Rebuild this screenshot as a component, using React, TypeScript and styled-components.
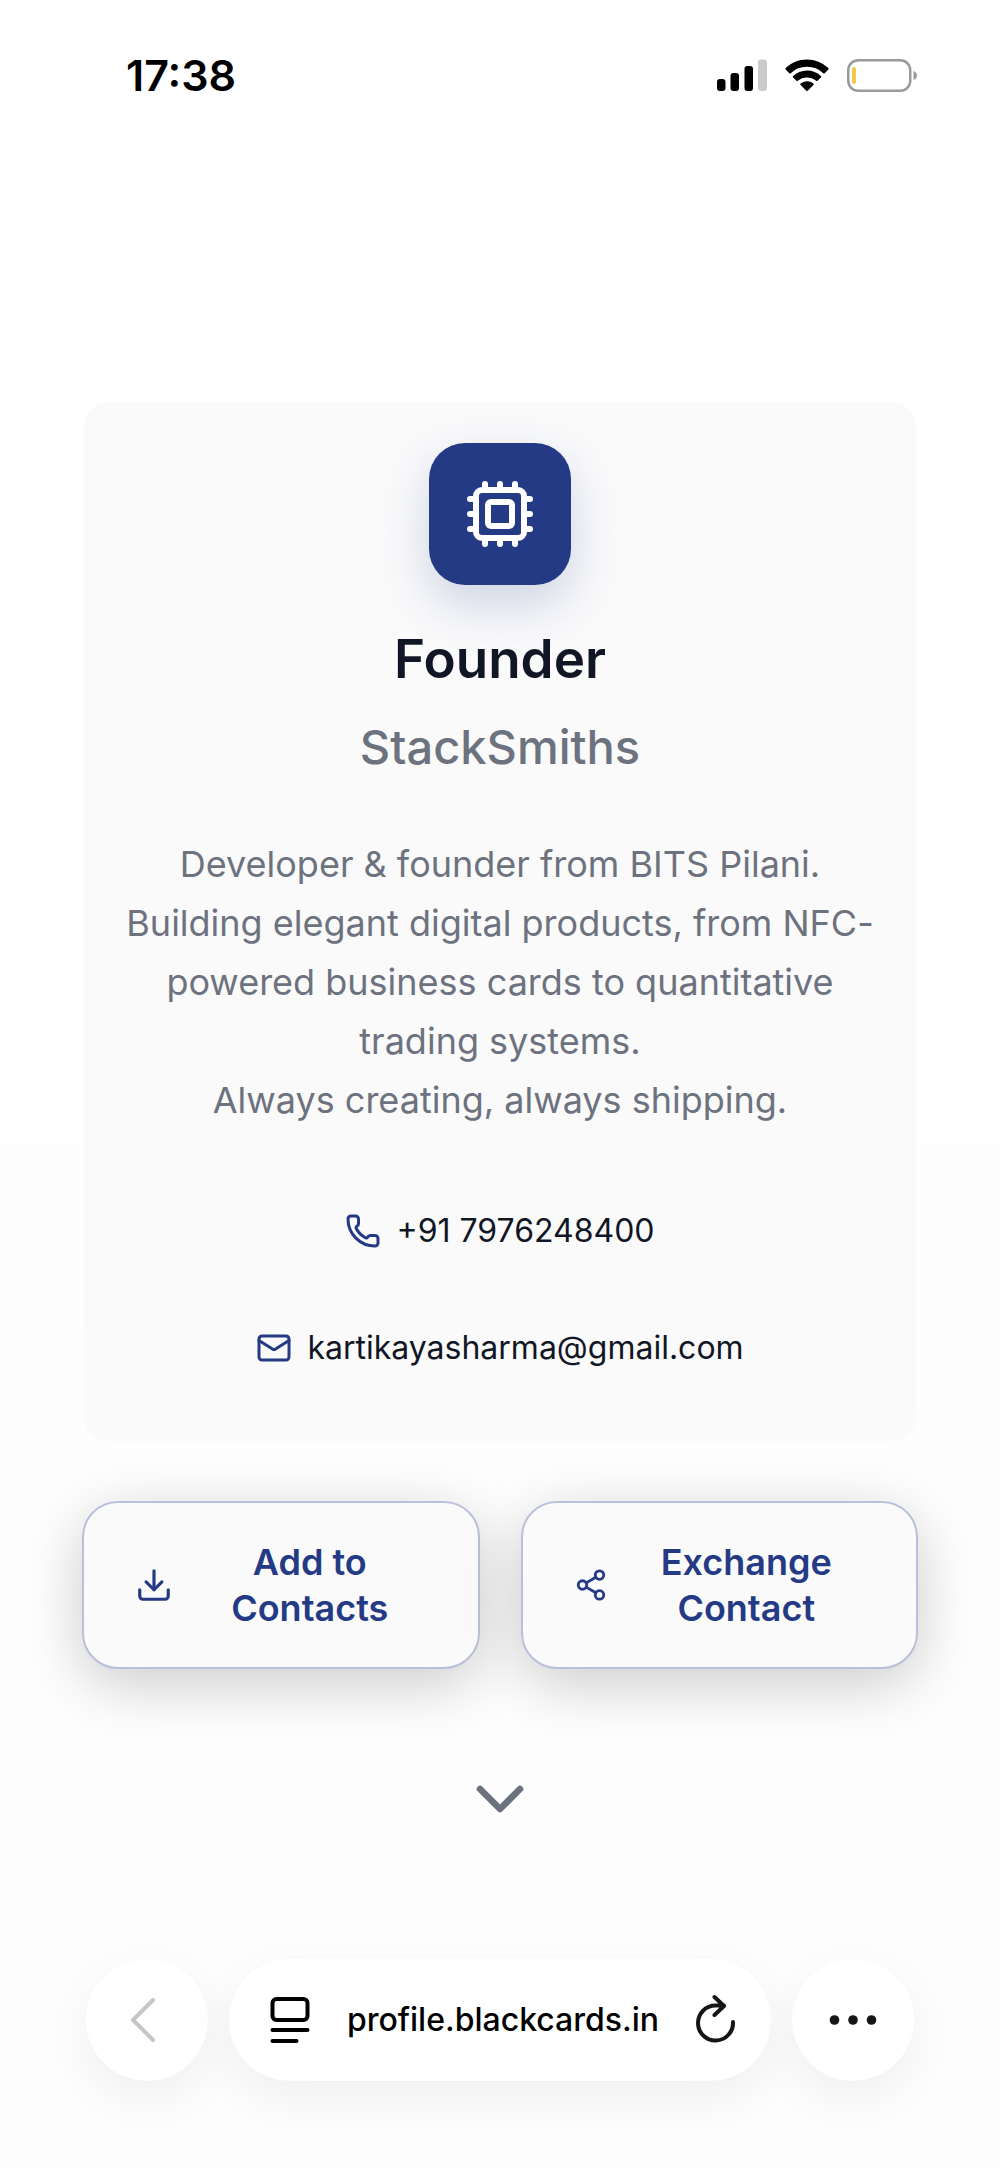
import React from "react";
import styled, { createGlobalStyle } from "styled-components";
import { ChevronDown, Cpu, Download, Mail, Phone, Share2 } from "lucide-react";

const color = {
  navy: "#243a85",
  ink: "#111625",
  muted: "#6d727f",
  surface: "#fafafb",
  outline: "#b9c0db",
};

const GlobalStyle = createGlobalStyle`
  *, *::before, *::after { box-sizing: border-box; }
  body {
    margin: 0;
    background: #fefefe;
    font-family: Inter, "Liberation Sans", sans-serif;
  }
  button, input { font: inherit; }
`;

const Screen = styled.div`
  display: flex;
  flex-direction: column;
  min-height: 100vh;
  background: linear-gradient(#ffffff, #fdfdfd);
`;

const StatusBar = styled.header`
  display: flex;
  align-items: center;
  justify-content: space-between;
  height: 150px;
  padding: 0 82px 0 126px;
`;

const Clock = styled.time`
  font-size: 43px;
  font-weight: 600;
  line-height: 52px;
  color: #000;
`;

const StatusIcons = styled.div`
  display: flex;
  align-items: center;
  gap: 18px;
`;

const Main = styled.main`
  flex: 1;
  display: flex;
  flex-direction: column;
  padding: 252px 82px 0;
`;

const Card = styled.section`
  display: flex;
  flex-direction: column;
  align-items: center;
  margin: 0 2px;
  padding: 41px 38px 64px;
  border-radius: 24px;
  background: ${color.surface};
  text-align: center;
`;

const LogoTile = styled.div`
  display: grid;
  place-items: center;
  width: 142px;
  height: 142px;
  border-radius: 36px;
  background: ${color.navy};
  color: #fff;
  box-shadow: 0 20px 50px rgba(36, 58, 133, 0.2);
`;

const Title = styled.h1`
  margin: 42px 0 0;
  font-size: 53px;
  font-weight: 600;
  line-height: 64px;
  color: ${color.ink};
`;

const Company = styled.p`
  margin: 26px 0 0;
  font-size: 47px;
  font-weight: 500;
  line-height: 60px;
  color: ${color.muted};
`;

const Bio = styled.p`
  margin: 58px 0 0;
  font-size: 36px;
  line-height: 59px;
  color: ${color.muted};
`;

const ContactList = styled.address`
  display: flex;
  flex-direction: column;
  align-items: center;
  gap: 58px;
  margin-top: 71px;
  font-style: normal;
`;

const ContactLink = styled.a`
  display: flex;
  align-items: center;
  gap: 15px;
  font-size: 32px;
  line-height: 59px;
  color: ${color.ink};
  text-decoration: none;

  svg { color: ${color.navy}; }
`;

const Actions = styled.div`
  display: grid;
  grid-template-columns: 1fr 1fr;
  gap: 41px;
  margin-top: 60px;
`;

const ActionButton = styled.button`
  display: flex;
  align-items: center;
  gap: 20px;
  padding: 36px 51px;
  border: 2px solid ${color.outline};
  border-radius: 36px;
  background: ${color.surface};
  box-shadow: 0 15px 60px rgba(0, 0, 0, 0.2);
  color: ${color.navy};
  font-size: 36px;
  font-weight: 600;
  line-height: 46px;
  cursor: pointer;

  svg { flex: none; }
`;

const ActionLabel = styled.span`
  flex: 1;
`;

const MoreButton = styled.button`
  align-self: center;
  display: flex;
  margin-top: 90px;
  padding: 0;
  border: 0;
  background: none;
  color: ${color.muted};
  cursor: pointer;
`;

const BrowserBar = styled.nav`
  display: flex;
  gap: 21px;
  padding: 120px 86px 87px;
`;

const RoundButton = styled.button`
  display: grid;
  place-items: center;
  flex: none;
  width: 122px;
  height: 122px;
  padding: 0;
  border: 0;
  border-radius: 50%;
  background: #fff;
  box-shadow: 0 16px 50px rgba(0, 0, 0, 0.06);
`;

const AddressPill = styled.div`
  flex: 1;
  display: flex;
  align-items: center;
  min-width: 0;
  height: 122px;
  padding: 0 35px 0 41px;
  border-radius: 61px;
  background: #fff;
  box-shadow: 0 16px 50px rgba(0, 0, 0, 0.06);
`;

const PlainButton = styled.button`
  display: flex;
  padding: 0;
  border: 0;
  background: none;
`;

const AddressInput = styled.input`
  flex: 1;
  min-width: 0;
  padding: 0;
  border: 0;
  outline: 0;
  background: none;
  color: #000;
  font-size: 32px;
  font-weight: 500;
  line-height: 48px;
  text-align: center;
`;

const SignalIcon = () => (
  <svg width="50" height="33" viewBox="0 0 50 33" aria-hidden="true">
    <rect x="0" y="20" width="8.500" height="12" rx="3" />
    <rect x="13.500" y="14" width="8.500" height="18" rx="3" />
    <rect x="27.500" y="7" width="8.500" height="25" rx="3" />
    <rect x="41" y="0.500" width="9" height="31.500" rx="3" fill="#cbcbcb" />
  </svg>
);

const WifiIcon = () => (
  <svg width="44" height="33" viewBox="0 0 44 33" aria-hidden="true">
    <path d="M22 .5C13.700 .5 6.200 3.800 .7 9.100a1 1 0 0 0 0 1.400l3.600 3.700a1 1 0 0 0 1.400 0A23.500 23.500 0 0 1 22 7.800a23.500 23.500 0 0 1 16.300 6.400 1 1 0 0 0 1.400 0l3.600-3.700a1 1 0 0 0 0-1.400A30.800 30.800 0 0 0 22 .5z" />
    <path d="M22 11.500c-5.400 0-10.300 2.100-13.900 5.500a1 1 0 0 0 0 1.400l3.400 3.400a1 1 0 0 0 1.300 0A13.600 13.600 0 0 1 22 18.400c3.500 0 6.700 1.200 9.200 3.400a1 1 0 0 0 1.300 0l3.400-3.400a1 1 0 0 0 0-1.400A20.200 20.200 0 0 0 22 11.500z" />
    <path d="M22 22.200c-2.500 0-4.700.9-6.400 2.400a1 1 0 0 0 0 1.500l5.700 5.600a1 1 0 0 0 1.400 0l5.700-5.600a1 1 0 0 0 0-1.500A9.600 9.600 0 0 0 22 22.200z" />
  </svg>
);

const BatteryIcon = () => (
  <svg width="71" height="33" viewBox="0 0 71 33" fill="none" aria-hidden="true">
    <rect x="1.250" y="1.250" width="62" height="30.500" rx="10" stroke="#9a9a9a" strokeWidth="2.500" />
    <rect x="5" y="8" width="4" height="17" rx="2" fill="#f0c94d" />
    <path d="M66.500 12v9c2-.8 3.500-2.300 3.500-4.500s-1.500-3.700-3.500-4.500z" fill="#9a9a9a" />
  </svg>
);

const BackIcon = () => (
  <svg width="34" height="46" viewBox="0 0 34 46" fill="none" aria-hidden="true">
    <path d="M23 3 3 23l20 20" stroke="#c6c6c6" strokeWidth="4" strokeLinecap="round" strokeLinejoin="round" />
  </svg>
);

const PageIcon = () => (
  <svg width="40" height="46" viewBox="0 0 40 46" fill="none" stroke="#000" strokeWidth="4" strokeLinecap="round" aria-hidden="true">
    <rect x="2.500" y="2" width="35" height="21" rx="4" />
    <path d="M2.500 33h35M2.500 44h24" />
  </svg>
);

const ReloadIcon = () => (
  <svg width="40" height="52" viewBox="0 0 40 52" fill="none" stroke="#161616" strokeWidth="4" strokeLinecap="round" strokeLinejoin="round" aria-hidden="true">
    <path d="M37 28A17.500 17.500 0 1 1 19.500 11.500H28M18.500 3l9.500 9-9.500 9" />
  </svg>
);

const DotsIcon = () => (
  <svg width="48" height="12" viewBox="0 0 48 12" fill="#161616" aria-hidden="true">
    <circle cx="5.500" cy="6" r="4.800" />
    <circle cx="24" cy="6" r="4.800" />
    <circle cx="42.500" cy="6" r="4.800" />
  </svg>
);

export default function App() {
  return (
    <>
      <GlobalStyle />
      <Screen>
        <StatusBar>
          <Clock dateTime="17:38">17:38</Clock>
          <StatusIcons>
            <SignalIcon />
            <WifiIcon />
            <BatteryIcon />
          </StatusIcons>
        </StatusBar>

        <Main>
          <Card>
            <LogoTile>
              <Cpu size={72} />
            </LogoTile>
            <Title>Founder</Title>
            <Company>StackSmiths</Company>
            <Bio>
              Developer &amp; founder from BITS Pilani.
              <br />
              Building elegant digital products, from NFC-powered business cards
              to quantitative trading systems.
              <br />
              Always creating, always shipping.
            </Bio>
            <ContactList>
              <ContactLink href="tel:+917976248400">
                <Phone size={36} />
                +91 7976248400
              </ContactLink>
              <ContactLink href="mailto:kartikayasharma@gmail.com">
                <Mail size={36} />
                kartikayasharma@gmail.com
              </ContactLink>
            </ContactList>
          </Card>

          <Actions>
            <ActionButton type="button">
              <Download size={38} />
              <ActionLabel>Add to Contacts</ActionLabel>
            </ActionButton>
            <ActionButton type="button">
              <Share2 size={34} />
              <ActionLabel>Exchange Contact</ActionLabel>
            </ActionButton>
          </Actions>

          <MoreButton type="button" aria-label="Show more">
            <ChevronDown size={80} />
          </MoreButton>
        </Main>

        <BrowserBar aria-label="Browser">
          <RoundButton type="button" aria-label="Back">
            <BackIcon />
          </RoundButton>
          <AddressPill>
            <PlainButton type="button" aria-label="Page menu">
              <PageIcon />
            </PlainButton>
            <AddressInput
              type="text"
              aria-label="Address"
              defaultValue="profile.blackcards.in"
            />
            <PlainButton type="button" aria-label="Reload">
              <ReloadIcon />
            </PlainButton>
          </AddressPill>
          <RoundButton type="button" aria-label="More options">
            <DotsIcon />
          </RoundButton>
        </BrowserBar>
      </Screen>
    </>
  );
}
